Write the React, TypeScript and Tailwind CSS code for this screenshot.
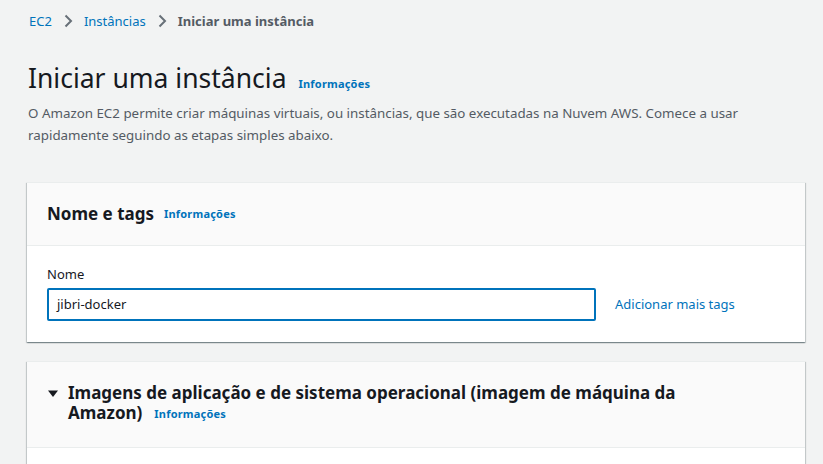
function Info({ className = "" }: { className?: string }) {
  return (
    <a className={"text-[11px] font-bold text-[#0073bb] tracking-[0.2px] " + className}>
      Informações
    </a>
  );
}

function Chevron() {
  return (
    <svg width="16" height="16" viewBox="0 0 16 16" className="mx-[8px]">
      <path d="M5.5 2.5 11 8l-5.5 5.5" fill="none" stroke="#687078" strokeWidth="2" />
    </svg>
  );
}

const cardShadow =
  "shadow-[0_1px_1px_0_rgba(0,28,36,0.3),1px_1px_1px_0_rgba(0,28,36,0.15),-1px_1px_1px_0_rgba(0,28,36,0.15)]";

export default function App() {
  return (
    <div className="h-screen overflow-hidden bg-[#f2f3f3] font-['Noto_Sans',sans-serif] text-[#16191f]">
      <div className="pl-[27px] pr-[18px]">
        <nav className="flex items-center h-[14px] mt-[14px] text-[13px] leading-[14px] pl-[2px]">
          <a className="text-[#0073bb]">EC2</a>
          <Chevron />
          <a className="text-[#0073bb]">Instâncias</a>
          <Chevron />
          <span className="font-bold text-[#545b64]">Iniciar uma instância</span>
        </nav>

        <div className="mt-[32px] flex items-baseline gap-3 pl-px">
          <h1 className="text-[26.5px] leading-[36px] font-normal">Iniciar uma instância</h1>
          <Info />
        </div>
        <p className="text-[13.35px] leading-[22px] text-[#545b64] pl-px mt-[6px] max-w-[760px]">
          O Amazon EC2 permite criar máquinas virtuais, ou instâncias, que são executadas na Nuvem AWS. Comece a usar
          rapidamente seguindo as etapas simples abaixo.
        </p>

        <section className={"mt-[36px] bg-white border-t border-[#eaeded] " + cardShadow}>
          <header className="bg-[#fafafa] border-b border-[#eaeded] h-[63px] px-5 flex items-center">
            <h2 className="text-[17px] font-bold leading-[22px]">Nome e tags</h2>
            <Info className="ml-[10px] mt-px" />
          </header>
          <div className="px-5 pt-[19px] pb-[21px]">
            <label className="block text-[13px] leading-[18px]">Nome</label>
            <div className="mt-[5px] flex items-center">
              <div className="w-[549px] h-[33px] border-2 border-[#0073bb] rounded-[2px] px-2 flex items-center text-[13px]">
                jibri-docker
              </div>
              <a className="ml-[19px] text-[13px] text-[#0073bb]">Adicionar mais tags</a>
            </div>
          </div>
        </section>

        <section className={"mt-[19px] bg-white border-t border-[#eaeded] " + cardShadow}>
          <header className="bg-[#fafafa] border-b border-[#eaeded] px-5 pt-[21px] pb-[24px] flex">
            <svg width="12" height="12" viewBox="0 0 12 12" className="mt-[5px] mr-[9px] shrink-0">
              <path d="M1 2.5h10L6 9z" fill="#16191f" />
            </svg>
            <h2 className="text-[17px] font-bold leading-[20px] max-w-[620px]">
              Imagens de aplicação e de sistema operacional (imagem de máquina da Amazon)
              <Info className="ml-[12px] inline-block leading-[16px] align-[1px]" />
            </h2>
          </header>
          <div className="h-[40px]" />
        </section>
      </div>
    </div>
  );
}
